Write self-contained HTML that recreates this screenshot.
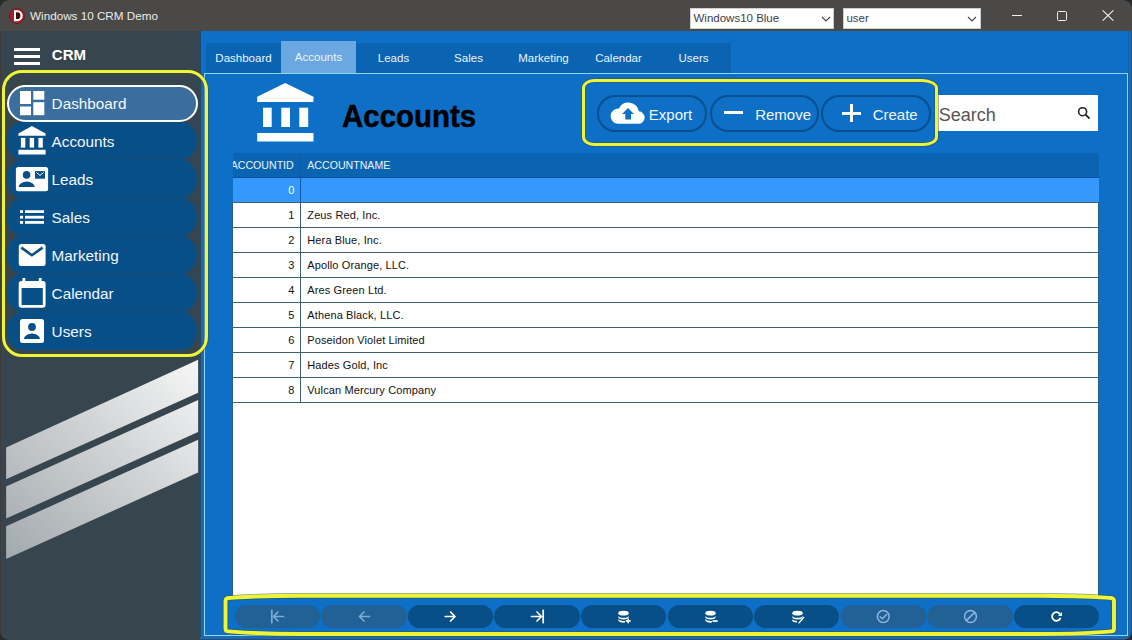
<!DOCTYPE html>
<html><head><meta charset="utf-8"><title>Windows 10 CRM Demo</title>
<style>
html,body{margin:0;padding:0;width:1132px;height:640px;overflow:hidden;background:#2a2a2a;}
body{position:relative;font-family:"Liberation Sans", sans-serif;}
.a{position:absolute;}
.t{position:absolute;white-space:nowrap;line-height:1;font-family:"Liberation Sans", sans-serif;}
</style></head><body>
<div class="a" style="left:0px;top:0px;width:1132px;height:31px;background:#4a4947;"></div>
<svg class="a" style="left:0;top:0" width="30" height="30">
<circle cx="17" cy="16" r="7.6" fill="#a51e2a" stroke="#701520" stroke-width="0.8"/>
<path d="M14 10.2 H17.4 A5.3 5.5 0 0 1 17.4 21.2 H14 Z" fill="#fff"/>
<path d="M16 12.3 H17.2 A3.2 3.4 0 0 1 17.2 19.1 H16 Z" fill="#3a0a10"/>
</svg>
<div class="t" style="left:30px;top:10.35px;font-size:11.7px;color:#ececec;font-weight:normal;">Windows 10 CRM Demo</div>
<div class="a" style="left:690px;top:8px;width:144px;height:21px;background:#fff;box-sizing:border-box;border:1px solid #cfcfcf;"></div>
<div class="t" style="left:693.5px;top:12.85px;font-size:11.5px;color:#403c48;font-weight:normal;">Windows10 Blue</div>
<svg class="a" style="left:820px;top:14px" width="12" height="10"><path d="M2 3 L6 7 L10 3" fill="none" stroke="#444" stroke-width="1.1"/></svg>
<div class="a" style="left:843px;top:8px;width:138px;height:21px;background:#fff;box-sizing:border-box;border:1px solid #cfcfcf;"></div>
<div class="t" style="left:846.4px;top:12.85px;font-size:11.5px;color:#403c48;font-weight:normal;">user</div>
<svg class="a" style="left:966px;top:14px" width="12" height="10"><path d="M2 3 L6 7 L10 3" fill="none" stroke="#444" stroke-width="1.1"/></svg>
<div class="a" style="left:1011.5px;top:15px;width:10.5px;height:1px;background:#f0f0f0;"></div>
<div class="a" style="left:1056.5px;top:10.5px;width:10px;height:10px;box-sizing:border-box;border:1px solid #f0f0f0;border-radius:1.5px;"></div>
<svg class="a" style="left:1100px;top:8px" width="16" height="16"><path d="M2.6 2.4 L13.4 12.6 M13.4 2.4 L2.6 12.6" stroke="#f0f0f0" stroke-width="1.1"/></svg>
<div class="a" style="left:0px;top:31px;width:200px;height:609px;background:#37464e;"></div>
<div class="a" style="left:14.3px;top:48px;width:25.5px;height:2.8px;background:#fff;"></div>
<div class="a" style="left:14.3px;top:55px;width:25.5px;height:2.8px;background:#fff;"></div>
<div class="a" style="left:14.3px;top:62.1px;width:25.5px;height:2.8px;background:#fff;"></div>
<div class="t" style="left:51.8px;top:46.60px;font-size:15px;color:#fff;font-weight:bold;">CRM</div>
<div class="a" style="left:7px;top:84.5px;width:190.5px;height:37px;background:#3c6e9d;box-sizing:border-box;border:2px solid #fff;border-radius:19px;"></div>
<div class="a" style="left:7.2px;top:121.5px;width:190.3px;height:38px;background:#084f88;border-radius:15px/19px;"></div>
<div class="a" style="left:7.2px;top:159.5px;width:190.3px;height:38px;background:#084f88;border-radius:15px/19px;"></div>
<div class="a" style="left:7.2px;top:197.5px;width:190.3px;height:38px;background:#084f88;border-radius:15px/19px;"></div>
<div class="a" style="left:7.2px;top:235.5px;width:190.3px;height:38px;background:#084f88;border-radius:15px/19px;"></div>
<div class="a" style="left:7.2px;top:273.5px;width:190.3px;height:38px;background:#084f88;border-radius:15px/19px;"></div>
<div class="a" style="left:7.2px;top:311.5px;width:190.3px;height:38px;background:#084f88;border-radius:15px/19px;"></div>
<div class="a" style="left:12px;top:159px;width:180px;height:1px;background:rgba(40,70,100,0.45);"></div>
<div class="a" style="left:12px;top:197px;width:180px;height:1px;background:rgba(40,70,100,0.45);"></div>
<div class="a" style="left:12px;top:235px;width:180px;height:1px;background:rgba(40,70,100,0.45);"></div>
<div class="a" style="left:12px;top:273px;width:180px;height:1px;background:rgba(40,70,100,0.45);"></div>
<div class="a" style="left:12px;top:311px;width:180px;height:1px;background:rgba(40,70,100,0.45);"></div>
<div class="t" style="left:51.6px;top:95.65px;font-size:15.3px;color:#f2f8ff;font-weight:normal;">Dashboard</div>
<div class="t" style="left:51.6px;top:133.65px;font-size:15.3px;color:#f2f8ff;font-weight:normal;">Accounts</div>
<div class="t" style="left:51.6px;top:171.65px;font-size:15.3px;color:#f2f8ff;font-weight:normal;">Leads</div>
<div class="t" style="left:51.6px;top:209.65px;font-size:15.3px;color:#f2f8ff;font-weight:normal;">Sales</div>
<div class="t" style="left:51.6px;top:247.65px;font-size:15.3px;color:#f2f8ff;font-weight:normal;">Marketing</div>
<div class="t" style="left:51.6px;top:285.65px;font-size:15.3px;color:#f2f8ff;font-weight:normal;">Calendar</div>
<div class="t" style="left:51.6px;top:323.65px;font-size:15.3px;color:#f2f8ff;font-weight:normal;">Users</div>
<svg class="a" style="left:0;top:0" width="200" height="360">
<g fill="#fff">
<!-- dashboard -->
<rect x="20" y="91" width="11" height="13"/>
<rect x="20" y="106.5" width="11" height="8.7"/>
<rect x="33.3" y="91" width="11" height="8.7"/>
<rect x="33.3" y="102.2" width="11" height="13"/>
<!-- accounts -->
<path d="M18.4 133.6 L31.9 126.1 L45.6 133.6 L45.6 135.8 L18.4 135.8 Z"/>
<rect x="20.9" y="137.9" width="4.4" height="9.7"/>
<rect x="29.7" y="137.9" width="4.4" height="9.7"/>
<rect x="38.4" y="137.9" width="4.4" height="9.7"/>
<rect x="18.4" y="149.8" width="27.2" height="4.7"/>
<!-- leads -->
<rect x="15.9" y="166.9" width="32.2" height="24.3" rx="2.5"/>
<!-- sales -->
<rect x="20" y="210.2" width="3.1" height="2.8"/>
<rect x="20" y="215.8" width="3.1" height="2.8"/>
<rect x="20" y="221" width="3.1" height="2.8"/>
<rect x="25" y="210.2" width="19" height="2.8"/>
<rect x="25" y="215.8" width="19" height="2.8"/>
<rect x="25" y="221" width="19" height="2.8"/>
<!-- marketing -->
<rect x="18.8" y="244.1" width="26.8" height="21.8" rx="2.5"/>
<!-- calendar -->
<path fill-rule="evenodd" d="M21.5 280.9 H42.8 A2.8 2.8 0 0 1 45.6 283.7 V305 A2.8 2.8 0 0 1 42.8 307.8 H21.5 A2.8 2.8 0 0 1 18.7 305 V283.7 A2.8 2.8 0 0 1 21.5 280.9 Z M21.6 288 V304.9 H42.8 V288 Z"/>
<rect x="22.5" y="278" width="2.8" height="4"/>
<rect x="38.8" y="278" width="2.8" height="4"/>
<!-- users -->
<rect x="20" y="318.9" width="24" height="24.2" rx="2.5"/>
</g>
<g fill="#084f88">
<circle cx="26.6" cy="174.9" r="3.8"/>
<path d="M18.7 186.9 A8 5.3 0 0 1 34.7 186.9 Z"/>
<rect x="35" y="171.1" width="10" height="7.6"/>
<circle cx="32" cy="326.9" r="3.9"/>
<path d="M23.9 338.9 A8.05 5.3 0 0 1 40 338.9 Z"/>
</g>
<path d="M36.5 172.6 L40 175.4 L43.5 172.6" fill="none" stroke="#fff" stroke-width="1"/>
<path d="M21.3 247.6 L31.9 255.2 L42.6 247.6" fill="none" stroke="#084f88" stroke-width="2.6"/>
</svg>
<svg class="a" style="left:0;top:340px" width="200" height="240">
<defs><linearGradient id="sg" gradientUnits="userSpaceOnUse" x1="6" y1="220" x2="198" y2="20">
<stop offset="0" stop-color="#a2a9ad"/><stop offset="1" stop-color="#f6f6f6"/></linearGradient></defs>
<g fill="url(#sg)">
<path d="M6.1 107.5 L198.1 19.8 L198.1 52.7 L6.1 139.2 Z"/>
<path d="M6.1 146.4 L198.1 59.9 L198.1 92 L6.1 178.6 Z"/>
<path d="M6.1 186.3 L198.1 99.7 L198.1 132.5 L6.1 219 Z"/>
</g></svg>
<div class="a" style="left:0px;top:31px;width:1px;height:609px;background:#3d3d3d;"></div>
<div class="a" style="left:200px;top:31px;width:932px;height:609px;background:#0e6fc6;"></div>
<div class="a" style="left:200px;top:31px;width:1px;height:609px;background:#1f4a70;"></div>
<div class="a" style="left:201px;top:73px;width:3px;height:567px;background:#2466a3;"></div>
<div class="a" style="left:206px;top:43px;width:525px;height:30px;background:#0a64b2;"></div>
<div class="a" style="left:281px;top:41px;width:75px;height:32px;background:#6ba7e0;"></div>
<div class="t" style="left:206.0px;width:75px;text-align:center;top:53.45px;font-size:11.5px;color:#eaf4ff;font-weight:normal;">Dashboard</div>
<div class="t" style="left:281.0px;width:75px;text-align:center;top:52.45px;font-size:11.5px;color:#eaf4ff;font-weight:normal;">Accounts</div>
<div class="t" style="left:356.0px;width:75px;text-align:center;top:53.45px;font-size:11.5px;color:#eaf4ff;font-weight:normal;">Leads</div>
<div class="t" style="left:431.0px;width:75px;text-align:center;top:53.45px;font-size:11.5px;color:#eaf4ff;font-weight:normal;">Sales</div>
<div class="t" style="left:506.0px;width:75px;text-align:center;top:53.45px;font-size:11.5px;color:#eaf4ff;font-weight:normal;">Marketing</div>
<div class="t" style="left:581.0px;width:75px;text-align:center;top:53.45px;font-size:11.5px;color:#eaf4ff;font-weight:normal;">Calendar</div>
<div class="t" style="left:656.0px;width:75px;text-align:center;top:53.45px;font-size:11.5px;color:#eaf4ff;font-weight:normal;">Users</div>
<div class="a" style="left:204px;top:72.5px;width:924px;height:563.5px;box-sizing:border-box;border:1px solid #8fd6fb;"></div>
<svg class="a" style="left:250px;top:78px" width="70" height="70">
<g fill="#fff" transform="translate(-250 -78)">
<path d="M257.2 96.7 L285.2 82.9 L313.5 96.7 L313.5 102 L257.2 102 Z"/>
<rect x="263" y="107.7" width="8.7" height="19.3"/>
<rect x="281.3" y="107.7" width="8.7" height="19.3"/>
<rect x="299.3" y="107.7" width="8.9" height="19.3"/>
<rect x="257.2" y="133" width="56.3" height="8.5"/>
</g></svg>
<div class="t" style="left:342px;top:99.50px;font-size:32px;color:#000;font-weight:bold;transform:scaleX(0.92);transform-origin:0 0;-webkit-text-stroke:0.5px #000;">Accounts</div>
<div class="a" style="left:597px;top:95px;width:110px;height:36.5px;box-sizing:border-box;border:2px solid #0a4f8e;border-radius:18.25px;"></div>
<div class="a" style="left:709.5px;top:95px;width:109.5px;height:36.5px;box-sizing:border-box;border:2px solid #0a4f8e;border-radius:18.25px;"></div>
<div class="a" style="left:821px;top:95px;width:110px;height:36.5px;box-sizing:border-box;border:2px solid #0a4f8e;border-radius:18.25px;"></div>
<div class="t" style="left:648.8px;top:107.00px;font-size:15px;color:#f2f8ff;font-weight:normal;">Export</div>
<div class="t" style="left:755.2px;top:107.00px;font-size:15px;color:#f2f8ff;font-weight:normal;">Remove</div>
<div class="t" style="left:872.7px;top:107.00px;font-size:15px;color:#f2f8ff;font-weight:normal;">Create</div>
<svg class="a" style="left:608px;top:98px" width="40" height="30">
<g transform="translate(-608 -98)">
<path fill="#fff" d="M617.5 123.7 H638 A6.2 6.2 0 0 0 638.8 111.3 A10.5 10.5 0 0 0 619 108.5 A7.6 7.6 0 0 0 617.5 123.7 Z"/>
<path fill="#0e6fc6" d="M628 108 L634 114 H631 V119.5 H625.3 V114 H622 Z"/>
</g></svg>
<div class="a" style="left:724.4px;top:111px;width:19px;height:3.4px;background:#fff;"></div>
<div class="a" style="left:842.4px;top:111.5px;width:18.8px;height:3.2px;background:#fff;"></div>
<div class="a" style="left:850.2px;top:103.7px;width:3.2px;height:18.8px;background:#fff;"></div>
<div class="a" style="left:938px;top:95px;width:160px;height:36px;background:#fff;"></div>
<div class="t" style="left:938.7px;top:105.60px;font-size:18px;color:#555;font-weight:normal;">Search</div>
<svg class="a" style="left:1076px;top:105px" width="16" height="16">
<circle cx="6.6" cy="6.7" r="4" fill="none" stroke="#222" stroke-width="1.6"/>
<path d="M9.5 9.6 L13.6 13.7" stroke="#222" stroke-width="1.8"/>
</svg>
<div class="a" style="left:233px;top:153px;width:866px;height:444px;background:#fff;"></div>
<div class="a" style="left:233px;top:153px;width:866px;height:24.6px;background:#0a64b2;"></div>
<div class="a" style="left:233px;top:177px;width:866px;height:1px;background:#0652a0;"></div>
<div class="a" style="left:233px;top:178px;width:866px;height:24px;background:#3498fc;"></div>
<div class="a" style="left:233px;top:202px;width:866px;height:1px;background:#3d5f6f;"></div>
<div class="a" style="left:233px;top:227px;width:866px;height:1px;background:#3d5f6f;"></div>
<div class="a" style="left:233px;top:252px;width:866px;height:1px;background:#3d5f6f;"></div>
<div class="a" style="left:233px;top:277px;width:866px;height:1px;background:#3d5f6f;"></div>
<div class="a" style="left:233px;top:302px;width:866px;height:1px;background:#3d5f6f;"></div>
<div class="a" style="left:233px;top:327px;width:866px;height:1px;background:#3d5f6f;"></div>
<div class="a" style="left:233px;top:352px;width:866px;height:1px;background:#3d5f6f;"></div>
<div class="a" style="left:233px;top:377px;width:866px;height:1px;background:#3d5f6f;"></div>
<div class="a" style="left:233px;top:402px;width:866px;height:1px;background:#3d5f6f;"></div>
<div class="a" style="left:300px;top:153px;width:1px;height:250px;background:#3d5f6f;"></div>
<div class="a" style="left:232.4px;top:202px;width:1px;height:395px;background:#2a5e86;"></div>
<div class="a" style="left:1098px;top:202px;width:1px;height:395px;background:#2a5e86;"></div>
<div class="a" style="left:300px;top:153px;width:1px;height:49px;background:#0b5aa6;"></div>
<div class="a" style="left:233px;top:153px;width:67px;height:25px;overflow:hidden"><div class="t" style="left:-59.3px;width:120px;text-align:right;top:7.30px;font-size:10.6px;color:#eaf4ff;font-weight:normal;">ACCOUNTID</div></div>
<div class="t" style="left:307.3px;top:160.30px;font-size:10.6px;color:#eaf4ff;font-weight:normal;">ACCOUNTNAME</div>
<div class="t" style="left:254.3px;width:40px;text-align:right;top:185.10px;font-size:11px;color:#fff;font-weight:normal;">0</div>
<div class="t" style="left:254.3px;width:40px;text-align:right;top:210.05px;font-size:11px;color:#111;font-weight:normal;">1</div>
<div class="t" style="left:307.3px;top:210.05px;font-size:11px;color:#111;font-weight:normal;letter-spacing:0.12px;">Zeus Red, Inc.</div>
<div class="t" style="left:254.3px;width:40px;text-align:right;top:235.00px;font-size:11px;color:#111;font-weight:normal;">2</div>
<div class="t" style="left:307.3px;top:235.00px;font-size:11px;color:#111;font-weight:normal;letter-spacing:0.12px;">Hera Blue, Inc.</div>
<div class="t" style="left:254.3px;width:40px;text-align:right;top:259.95px;font-size:11px;color:#111;font-weight:normal;">3</div>
<div class="t" style="left:307.3px;top:259.95px;font-size:11px;color:#111;font-weight:normal;letter-spacing:0.12px;">Apollo Orange, LLC.</div>
<div class="t" style="left:254.3px;width:40px;text-align:right;top:284.90px;font-size:11px;color:#111;font-weight:normal;">4</div>
<div class="t" style="left:307.3px;top:284.90px;font-size:11px;color:#111;font-weight:normal;letter-spacing:0.12px;">Ares Green Ltd.</div>
<div class="t" style="left:254.3px;width:40px;text-align:right;top:309.85px;font-size:11px;color:#111;font-weight:normal;">5</div>
<div class="t" style="left:307.3px;top:309.85px;font-size:11px;color:#111;font-weight:normal;letter-spacing:0.12px;">Athena Black, LLC.</div>
<div class="t" style="left:254.3px;width:40px;text-align:right;top:334.80px;font-size:11px;color:#111;font-weight:normal;">6</div>
<div class="t" style="left:307.3px;top:334.80px;font-size:11px;color:#111;font-weight:normal;letter-spacing:0.12px;">Poseidon Violet Limited</div>
<div class="t" style="left:254.3px;width:40px;text-align:right;top:359.75px;font-size:11px;color:#111;font-weight:normal;">7</div>
<div class="t" style="left:307.3px;top:359.75px;font-size:11px;color:#111;font-weight:normal;letter-spacing:0.12px;">Hades Gold, Inc</div>
<div class="t" style="left:254.3px;width:40px;text-align:right;top:384.70px;font-size:11px;color:#111;font-weight:normal;">8</div>
<div class="t" style="left:307.3px;top:384.70px;font-size:11px;color:#111;font-weight:normal;letter-spacing:0.12px;">Vulcan Mercury Company</div>
<div class="a" style="left:234.6px;top:604.5px;width:85.4px;height:23.8px;background:#226195;border-radius:12px;"></div>
<div class="a" style="left:321.18px;top:604.5px;width:85.4px;height:23.8px;background:#226195;border-radius:12px;"></div>
<div class="a" style="left:407.76px;top:604.5px;width:85.4px;height:23.8px;background:#084f88;border-radius:12px;"></div>
<div class="a" style="left:494.34px;top:604.5px;width:85.4px;height:23.8px;background:#084f88;border-radius:12px;"></div>
<div class="a" style="left:580.92px;top:604.5px;width:85.4px;height:23.8px;background:#084f88;border-radius:12px;"></div>
<div class="a" style="left:667.5px;top:604.5px;width:85.4px;height:23.8px;background:#084f88;border-radius:12px;"></div>
<div class="a" style="left:754.08px;top:604.5px;width:85.4px;height:23.8px;background:#084f88;border-radius:12px;"></div>
<div class="a" style="left:840.66px;top:604.5px;width:85.4px;height:23.8px;background:#226195;border-radius:12px;"></div>
<div class="a" style="left:927.24px;top:604.5px;width:85.4px;height:23.8px;background:#226195;border-radius:12px;"></div>
<div class="a" style="left:1013.82px;top:604.5px;width:85.4px;height:23.8px;background:#084f88;border-radius:12px;"></div>
<svg class="a" style="left:0;top:590px" width="1132" height="50">
<g transform="translate(0 -590)" fill="none" stroke-linecap="round" stroke-linejoin="round">
<g stroke="#7eaad6" stroke-width="1.7">
<path d="M271.8 610.3 V622.7"/><path d="M273.5 616.5 H283.5 M278 612 L273.5 616.5 L278 621"/>
<path d="M359.5 616.5 H369.5 M364 612 L359.5 616.5 L364 621"/>
</g>
<g stroke="#fff" stroke-width="1.7">
<path d="M445.2 616.5 H455 M450.6 612 L455 616.5 L450.6 621"/>
<path d="M531.5 616.5 H541.5 M537 612 L541.5 616.5 L537 621 M543.2 610.3 V622.7"/>
</g>
<g stroke="#8cb6e0" stroke-width="1.5">
<circle cx="883.3" cy="616.5" r="5.9"/><path d="M880.2 616.7 L882.4 618.8 L886.6 614.4"/>
<circle cx="970.5" cy="616.5" r="5.9"/><path d="M974.4 612.6 L966.6 620.4"/>
</g>
<g stroke="#fff" stroke-width="1.8">
<path d="M1060.2 618.5 A4.3 4.3 0 1 1 1059.6 613.6"/>
</g>
<path d="M1062 612 L1062 616 L1058 616 Z" fill="#fff"/>
<g fill="#fff" stroke="none">
<!-- db plus -->
<ellipse cx="623.5" cy="613.2" rx="5.2" ry="2.4"/>
<path d="M618.3 615.4 A5.2 2.4 0 0 0 628.7 615.4 V617 A5.2 2.4 0 0 1 618.3 617 Z"/>
<path d="M618.3 618.7 A5.2 2.4 0 0 0 625 620.9 V622.6 A5.2 2.4 0 0 1 618.3 620.3 Z"/>
<path d="M627.4 618.5 H629 V620.1 H630.6 V621.7 H629 V623.3 H627.4 V621.7 H625.8 V620.1 H627.4 Z"/>
<!-- db minus -->
<ellipse cx="710.5" cy="613.2" rx="5.2" ry="2.4"/>
<path d="M705.3 615.4 A5.2 2.4 0 0 0 715.7 615.4 V617 A5.2 2.4 0 0 1 705.3 617 Z"/>
<path d="M705.3 618.7 A5.2 2.4 0 0 0 712 620.9 V622.6 A5.2 2.4 0 0 1 705.3 620.3 Z"/>
<rect x="712.5" y="620.2" width="5.2" height="1.7"/>
<!-- db edit -->
<ellipse cx="797.5" cy="613.2" rx="5.2" ry="2.4"/>
<path d="M792.3 615.4 A5.2 2.4 0 0 0 802.7 615.4 V617 A5.2 2.4 0 0 1 792.3 617 Z"/>
<path d="M792.3 618.7 A5.2 2.4 0 0 0 797 620.9 V622.6 A5.2 2.4 0 0 1 792.3 620.3 Z"/>
<path d="M798.5 622.4 L803.4 616.5 L804.6 617.6 L799.7 623.3 L798.2 623.5 Z"/>
</g>
</g>
</svg>
<div class="a" style="left:1.9px;top:70px;width:206.2px;height:287px;box-sizing:border-box;border:3.9px solid #eff437;border-radius:20px;box-shadow:0 0 0 0.8px rgba(50,80,60,0.55), inset 0 0 0 0.8px rgba(50,80,60,0.55);"></div>
<div class="a" style="left:581.7px;top:78.6px;width:356.7px;height:67.1px;box-sizing:border-box;border:3.9px solid #eff437;border-radius:12px 16px 14px 12px / 9px 9px 9px 9px;box-shadow:0 0 0 0.8px rgba(50,80,60,0.55), inset 0 0 0 0.8px rgba(50,80,60,0.55);"></div>
<svg class="a" style="left:0;top:580px" width="1132" height="60"><g transform="translate(0 -580)">
<path d="M225.5 601 Q225.5 598.2 228.5 598 C245 597 260 595.7 300 595.7 L1040 595.7 C1080 595.7 1095 597 1111 598 Q1114 598.2 1114 601 L1114 628.7 Q1114 631.3 1111 631.4 C1095 632.5 1080 634 1040 634 L300 634 C260 634 245 632.5 228.5 631.4 Q225.5 631.3 225.5 628.7 Z" fill="none" stroke="rgba(50,80,60,0.55)" stroke-width="5.4"/>
<path d="M225.5 601 Q225.5 598.2 228.5 598 C245 597 260 595.7 300 595.7 L1040 595.7 C1080 595.7 1095 597 1111 598 Q1114 598.2 1114 601 L1114 628.7 Q1114 631.3 1111 631.4 C1095 632.5 1080 634 1040 634 L300 634 C260 634 245 632.5 228.5 631.4 Q225.5 631.3 225.5 628.7 Z" fill="none" stroke="#eff437" stroke-width="3.9"/>
</g></svg>
<div class="a" style="left:1128px;top:31px;width:1px;height:609px;background:#1462ae;"></div>
<div class="a" style="left:1129px;top:31px;width:2px;height:609px;background:#2566a3;"></div>
<div class="a" style="left:1131px;top:31px;width:1px;height:609px;background:#1f4f80;"></div>
<div class="a" style="left:200px;top:637px;width:932px;height:2px;background:#2566a3;"></div>
<div class="a" style="left:200px;top:639px;width:932px;height:1px;background:#1f4f80;"></div>
<svg class="a" style="left:0;top:0" width="1132" height="640">
<path d="M0 0 H9 A9 9 0 0 0 0 9 Z" fill="#2a2a2a"/>
<path d="M1132 0 H1123 A9 9 0 0 1 1132 9 Z" fill="#2a2a2a"/>
<path d="M0 640 H9 A9 9 0 0 1 0 631 Z" fill="#2a2a2a"/>
<path d="M1132 640 H1123 A9 9 0 0 0 1132 631 Z" fill="#2a2a2a"/>
</svg>
</body></html>
